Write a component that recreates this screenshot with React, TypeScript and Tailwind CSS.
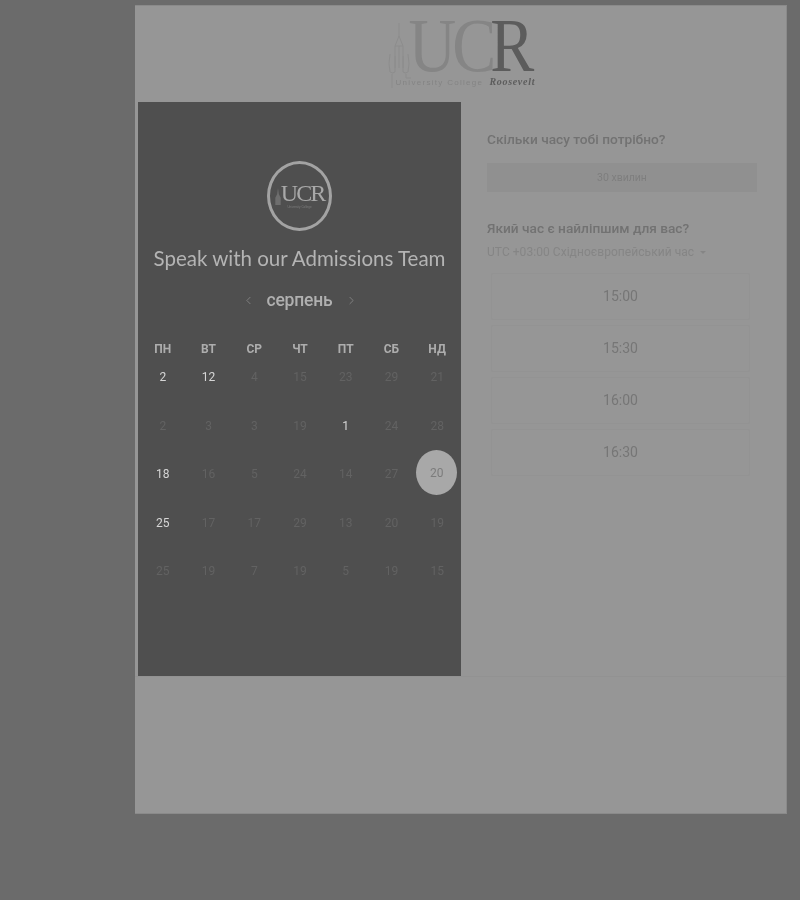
import { ChevronLeft, ChevronRight } from "lucide-react";

const days = ["ПН", "ВТ", "СР", "ЧТ", "ПТ", "СБ", "НД"];

// bright = day that has free slots, selected = the white circle
const weeks = [
  [{ d: "2", bright: true }, { d: "12", bright: true }, { d: "4" }, { d: "15" }, { d: "23" }, { d: "29" }, { d: "21" }],
  [{ d: "2" }, { d: "3" }, { d: "3" }, { d: "19" }, { d: "1", bright: true }, { d: "24" }, { d: "28" }],
  [{ d: "18", bright: true }, { d: "16" }, { d: "5" }, { d: "24" }, { d: "14" }, { d: "27" }, { d: "20", selected: true }],
  [{ d: "25", bright: true }, { d: "17" }, { d: "17" }, { d: "29" }, { d: "13" }, { d: "20" }, { d: "19" }],
  [{ d: "25" }, { d: "19" }, { d: "7" }, { d: "19" }, { d: "5" }, { d: "19" }, { d: "15" }],
];

const slots = ["15:00", "15:30", "16:00", "16:30"];

const Tower = () => (
  <svg viewBox="0 0 24 70" className="w-[24px] h-[70px] shrink-0 text-[#8a8a8a]" fill="none" stroke="currentColor" strokeWidth="0.8">
    <path d="M12 3 L12 16 M8 26 L12 16 L16 26 M8 26 H16 M8 26 V48 M16 26 V48 M12 26 V48" />
    <path d="M3 34 Q1 44 3 52 Q6 54 8 52 V36 M21 34 Q23 44 21 52 Q18 54 16 52 V36" />
    <path d="M5 54 V68 M19 54 V58 H24" />
  </svg>
);

const HeaderLogo = () => (
  <div className="flex items-start w-[148px] blur-[0.4px]">
    <Tower />
    <div className="flex flex-col -ml-[2px]">
      <div className="flex h-[52px] items-center font-['Liberation_Serif',serif] text-[66px] leading-none tracking-[-4px] scale-y-[1.14]">
        <span className="text-[#858585]">UC</span>
        <span className="text-[#5c5c5c] -ml-[2px]">R</span>
      </div>
      <div className="flex items-baseline gap-[6px] whitespace-nowrap -ml-[13px] mt-[2px]">
        <span className="font-['Liberation_Sans',sans-serif] text-[8px] tracking-[1.3px] text-[#848484]">University College</span>
        <span className="font-['Liberation_Serif',serif] italic font-bold text-[10px] tracking-[0.7px] text-[#5c5c5c]">Roosevelt</span>
      </div>
    </div>
  </div>
);

const App = () => {
  return (
    <div className="w-[800px] h-[900px] overflow-hidden bg-[#6b6b6b] pl-[135px] pt-[5px] font-['Roboto',sans-serif]">
      <div className="w-[652px] h-[809px] bg-[#969696] border-t border-r border-b border-[#8a8a8a]">
        {/* Logo header */}
        <div className="h-[96px] flex justify-center pt-[14px]">
          <HeaderLogo />
        </div>

        <div className="flex h-[575px] border-b border-[#929292]">
          {/* Calendar side */}
          <div className="ml-[3px] w-[323px] h-[574px] bg-[#4f4f4f] flex flex-col items-center">
            <div className="mt-[59px] w-[65px] h-[70px] rounded-[50%] border-[3px] border-[#a3a3a3] flex flex-col items-center justify-center blur-[0.4px]">
              <div className="flex items-end mt-[-2px]">
                <svg viewBox="0 0 6 20" className="w-[6px] h-[18px] text-[#6e6e6e]" fill="currentColor">
                  <path d="M3 1 L4 8 L6 12 V20 H0 V12 L2 8 Z" />
                </svg>
                <span className="font-['Liberation_Serif',serif] text-[24px] leading-none tracking-[-2px] text-[#a8a8a8]">UCR</span>
              </div>
              <span className="font-['Liberation_Sans',sans-serif] text-[3px] leading-none text-[#7d7d7d] mt-[1px]">University College</span>
            </div>

            <h1 className="mt-[12px] font-['Lato',sans-serif] text-[20.5px] leading-[30px] text-[#b4b4b4] whitespace-nowrap blur-[0.4px]">
              Speak with our Admissions Team
            </h1>

            <div className="mt-[15px] flex items-center h-[24px] blur-[0.4px]">
              <ChevronLeft className="w-[13px] h-[13px] text-[#8a8a8a]" strokeWidth={1.5} />
              <span className="mx-[9px] w-[72px] text-center text-[17.5px] tracking-[-0.2px] font-medium text-[#b0b0b0]">серпень</span>
              <ChevronRight className="w-[13px] h-[13px] text-[#8a8a8a]" strokeWidth={1.5} />
            </div>

            <div className="mt-[30px] ml-[1px] w-[320px] grid grid-cols-7 text-center blur-[0.4px]">
              {days.map((day) => (
                <div key={day} className="text-[12px] leading-[14px] font-bold text-[#adadad]">{day}</div>
              ))}
            </div>

            <div className="mt-[11px] ml-[1px] w-[320px] flex flex-col">
              {weeks.map((week, i) => (
                <div key={i} className="grid grid-cols-7 h-[48.5px] text-center">
                  {week.map((cell, j) =>
                    cell.selected ? (
                      <div key={j} className="relative h-[20px] flex justify-center">
                        <div className="absolute -top-[14px] left-[2px] w-[41px] h-[45px] rounded-[50%] bg-[#a8a8a8] flex items-center justify-center text-[12px] text-[#7c7c7c]">
                          <span className="blur-[0.4px]">{cell.d}</span>
                        </div>
                      </div>
                    ) : (
                      <div
                        key={j}
                        className={
                          cell.bright
                            ? "text-[12px] leading-[20px] text-[#d6d6d6] blur-[0.4px]"
                            : "text-[12px] leading-[20px] text-[#626262] blur-[0.5px]"
                        }
                      >
                        {cell.d}
                      </div>
                    )
                  )}
                </div>
              ))}
            </div>
          </div>

          {/* Time side */}
          <div className="pl-[26px] pt-[29px] w-[296px]">
            <h2 className="text-[13.7px] leading-[17px] font-medium text-[#727272] blur-[0.4px]">Скільки часу тобі потрібно?</h2>
            <div className="mt-[15px] w-[270px] h-[29px] bg-[#909090] flex items-center justify-center text-[10.5px] text-[#7e7e7e]">
              <span className="blur-[0.4px]">30 хвилин</span>
            </div>

            <h2 className="mt-[28px] text-[13.7px] leading-[17px] font-medium text-[#727272] blur-[0.4px]">Який час є найліпшим для вас?</h2>
            <div className="mt-[7px] flex items-center text-[12px] leading-[16px] tracking-[0.05px] text-[#858585] blur-[0.4px]">
              <span>UTC +03:00 Східноєвропейський час</span>
              <span className="ml-[6px] w-0 h-0 border-x-[3px] border-x-transparent border-t-[3px] border-t-[#858585]" />
            </div>

            <div className="mt-[13px] ml-[4px] w-[259px] flex flex-col gap-[5px]">
              {slots.map((slot) => (
                <div key={slot} className="h-[47px] border border-[#939393] rounded-[2px] flex items-center justify-center text-[14px] text-[#767676]">
                  <span className="blur-[0.4px]">{slot}</span>
                </div>
              ))}
            </div>
          </div>
        </div>
      </div>
    </div>
  );
};

export default App;
